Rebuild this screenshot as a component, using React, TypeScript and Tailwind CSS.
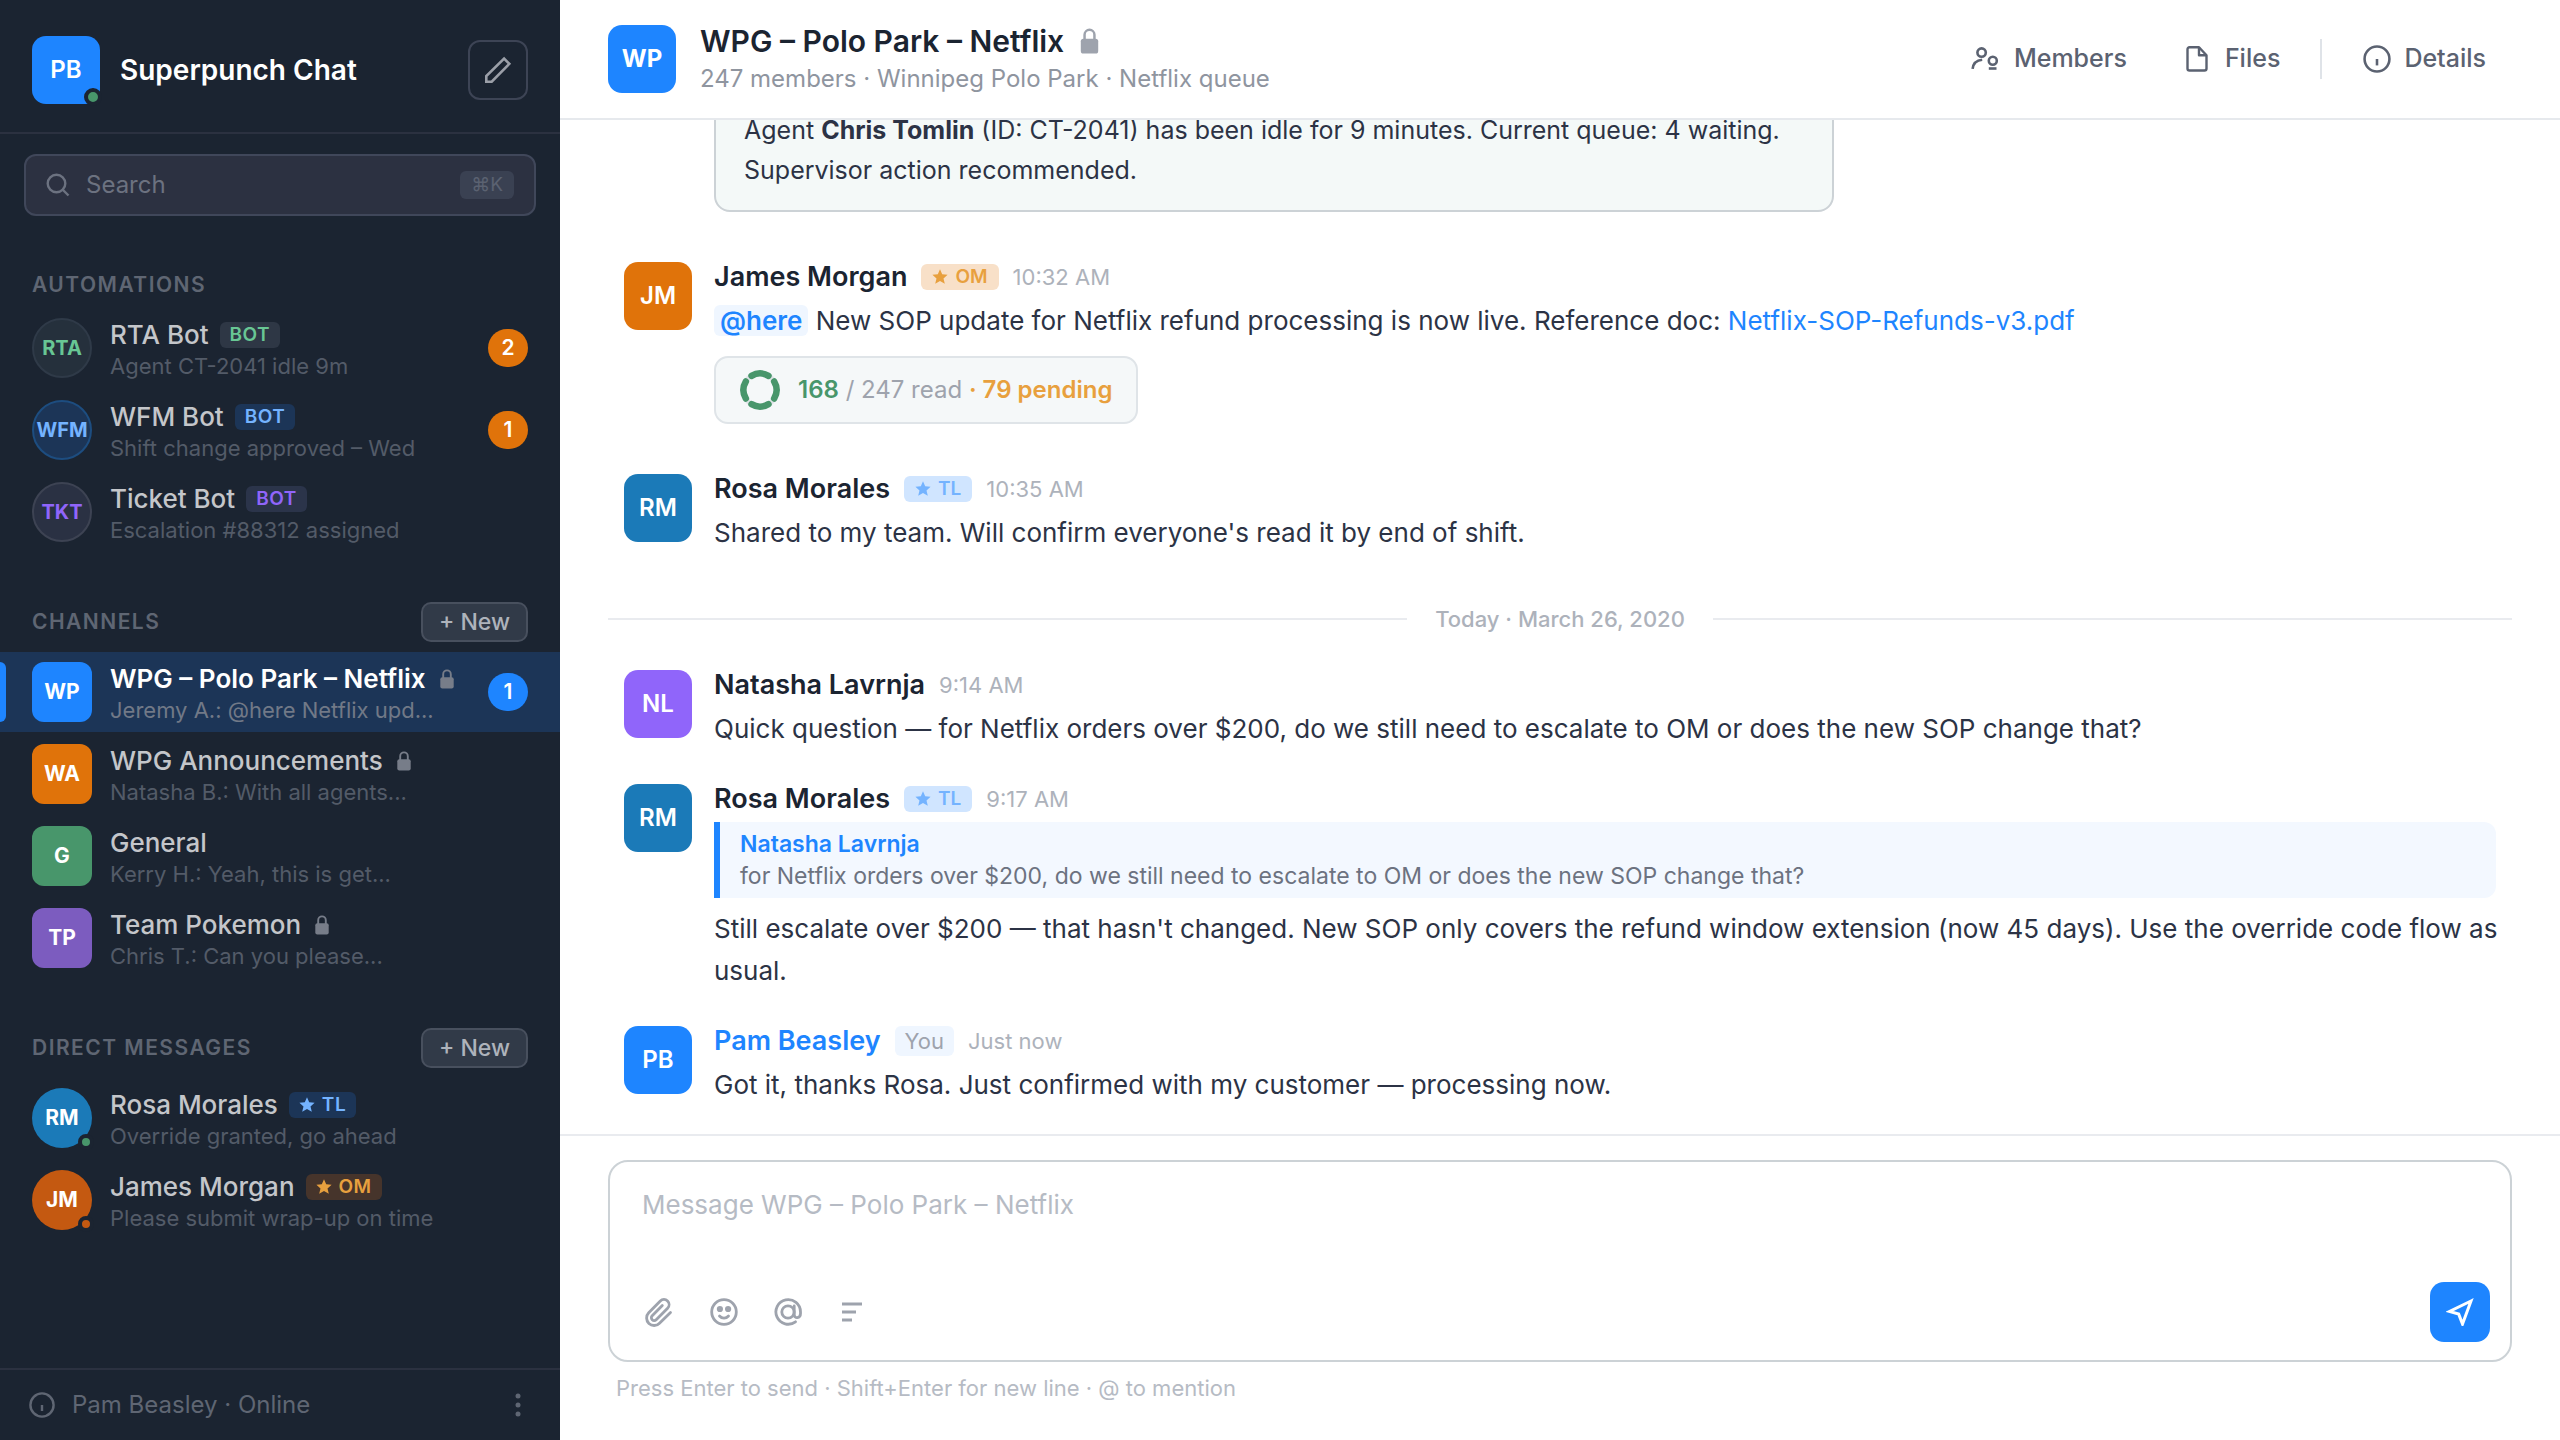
import type { ReactNode } from 'react';

type Tone = 'green' | 'blue' | 'violet' | 'orange';

interface SidebarEntry {
  name: string;
  preview: string;
  initials: string;
  avatar: string;
  tag?: { label: string; tone: Tone; star?: boolean };
  locked?: boolean;
  active?: boolean;
  unread?: number;
  unreadColor?: string;
  presence?: string;
}

const automations: SidebarEntry[] = [
  {
    name: 'RTA Bot',
    preview: 'Agent CT-2041 idle 9m',
    initials: 'RTA',
    avatar: 'rounded-full border-2 border-[#2f3a48] bg-[#25303c] text-xl text-[#68c694]',
    tag: { label: 'BOT', tone: 'green' },
    unread: 2,
    unreadColor: 'bg-[#e0730a]',
  },
  {
    name: 'WFM Bot',
    preview: 'Shift change approved – Wed',
    initials: 'WFM',
    avatar: 'rounded-full border-2 border-[#1d4d80] bg-[#1c3557] text-xl text-[#74b3ff]',
    tag: { label: 'BOT', tone: 'blue' },
    unread: 1,
    unreadColor: 'bg-[#e0730a]',
  },
  {
    name: 'Ticket Bot',
    preview: 'Escalation #88312 assigned',
    initials: 'TKT',
    avatar: 'rounded-full border-2 border-[#3d4353] bg-[#2a3143] text-xl text-[#9065fa]',
    tag: { label: 'BOT', tone: 'violet' },
  },
];

const channels: SidebarEntry[] = [
  {
    name: 'WPG – Polo Park – Netflix',
    preview: 'Jeremy A.: @here Netflix upd...',
    initials: 'WP',
    avatar: 'rounded-xl bg-[#1e85ff] text-[21px] text-white',
    locked: true,
    active: true,
    unread: 1,
    unreadColor: 'bg-[#1e85ff]',
  },
  {
    name: 'WPG Announcements',
    preview: 'Natasha B.: With all agents...',
    initials: 'WA',
    avatar: 'rounded-xl bg-[#e0730a] text-[21px] text-white',
    locked: true,
  },
  {
    name: 'General',
    preview: 'Kerry H.: Yeah, this is get...',
    initials: 'G',
    avatar: 'rounded-xl bg-[#48966b] text-[21px] text-white',
  },
  {
    name: 'Team Pokemon',
    preview: 'Chris T.: Can you please...',
    initials: 'TP',
    avatar: 'rounded-xl bg-[#7c5cbf] text-[21px] text-white',
    locked: true,
  },
];

const directMessages: SidebarEntry[] = [
  {
    name: 'Rosa Morales',
    preview: 'Override granted, go ahead',
    initials: 'RM',
    avatar: 'rounded-full bg-[#1b7ab8] text-[21px] text-white',
    tag: { label: 'TL', tone: 'blue', star: true },
    presence: 'bg-[#48966b]',
  },
  {
    name: 'James Morgan',
    preview: 'Please submit wrap-up on time',
    initials: 'JM',
    avatar: 'rounded-full bg-[#c45911] text-[21px] text-white',
    tag: { label: 'OM', tone: 'orange', star: true },
    presence: 'bg-[#c45911]',
  },
];

const darkTones: Record<Tone, string> = {
  green: 'bg-[#2e3745] text-[#68c694]',
  blue: 'bg-[#1c3557] text-[#74b3ff]',
  violet: 'bg-[#2b344a] text-[#9065fa]',
  orange: 'bg-[#46342b] text-[#e8a03e]',
};

function LockIcon({ className }: { className: string }) {
  return (
    <svg viewBox="0 0 14 20" className={className} aria-hidden="true">
      <path d="M3.2 9V5.2a3.8 3.8 0 0 1 7.6 0V9" fill="none" stroke="currentColor" strokeWidth="1.9" />
      <rect x="0.3" y="8.2" width="13.4" height="11.4" rx="2" fill="currentColor" />
    </svg>
  );
}

function StarIcon() {
  return (
    <svg viewBox="0 0 16 16" className="size-4" fill="currentColor" aria-hidden="true">
      <path d="M8 .3l2.2 5 5.4.5-4.1 3.6 1.3 5.4L8 12l-4.8 2.8 1.3-5.4L.4 5.8l5.4-.5z" />
    </svg>
  );
}

function InfoIcon({ className }: { className: string }) {
  return (
    <svg viewBox="0 0 28 28" className={className} fill="none" stroke="currentColor" strokeWidth="2.4" aria-hidden="true">
      <circle cx="14" cy="14" r="11.6" />
      <path d="M14 14v6" />
    </svg>
  );
}

function SectionHeading({ title, action }: { title: string; action?: string }) {
  return (
    <div className="flex items-center justify-between px-8 pb-[10px]">
      <h2 className="text-[21px] leading-[26px] font-semibold tracking-[0.07em] text-[#5f6673]">{title}</h2>
      {action && (
        <button
          type="button"
          aria-label={action}
          className="h-10 rounded-[10px] border-2 border-[#48505e] bg-[#313a48] px-4 text-[23px] leading-7 font-medium text-[#aeb3bb]"
        >
          + New
        </button>
      )}
    </div>
  );
}

function SidebarRow({ entry }: { entry: SidebarEntry }) {
  const { tag } = entry;
  return (
    <li>
      <a
        href="#"
        className={`relative flex items-center gap-[18px] px-8 py-2 ${entry.active ? 'bg-[#1c3557]' : ''}`}
      >
        {entry.active && <span className="absolute top-[10px] bottom-[10px] left-0 w-[6px] rounded-r-md bg-[#1e85ff]" />}
        <span className="relative shrink-0">
          <span className={`flex size-[60px] items-center justify-center font-bold ${entry.avatar}`}>{entry.initials}</span>
          {entry.presence && (
            <span className={`absolute -right-[2px] -bottom-[2px] size-4 rounded-full border-4 border-[#1b2431] ${entry.presence}`} />
          )}
        </span>
        <span className="min-w-0 flex-1 pt-[2px]">
          <span className="flex items-center">
            <span
              className={`truncate text-[26px] leading-[34px] ${entry.active ? 'font-semibold text-white' : 'font-medium text-[#c4c6ca]'}`}
            >
              {entry.name}
            </span>
            {entry.locked && <LockIcon className="ml-[14px] h-5 w-[14px] shrink-0 text-[#777d89]" />}
            {tag && (
              <span
                className={`ml-[11px] flex h-[26px] items-center gap-[7px] rounded-md px-[10px] text-[19px] font-semibold tracking-wide ${darkTones[tag.tone]}`}
              >
                {tag.star && <StarIcon />}
                {tag.label}
              </span>
            )}
          </span>
          <span className={`block truncate text-[22px] leading-7 ${entry.active ? 'text-[#717987]' : 'text-[#535b68]'}`}>
            {entry.preview}
          </span>
        </span>
        {entry.unread && (
          <span
            className={`flex h-[38px] min-w-10 items-center justify-center rounded-full text-[21px] font-semibold text-white ${entry.unreadColor}`}
          >
            {entry.unread}
          </span>
        )}
      </a>
    </li>
  );
}

function SidebarSection({ title, action, entries }: { title: string; action?: string; entries: SidebarEntry[] }) {
  return (
    <section>
      <SectionHeading title={title} action={action} />
      <ul className="flex flex-col gap-[2px]">
        {entries.map(entry => (
          <SidebarRow key={entry.name} entry={entry} />
        ))}
      </ul>
    </section>
  );
}

function Sidebar() {
  return (
    <aside className="flex w-[560px] shrink-0 flex-col bg-[#1b2431]">
      <div className="flex h-[134px] items-center gap-5 border-b-2 border-[#2b3140] px-8 pt-2">
        <div className="relative flex size-[68px] items-center justify-center rounded-[14px] bg-[#1e85ff] text-2xl font-semibold text-white">
          PB
          <span className="absolute -right-[2px] -bottom-[2px] size-[18px] rounded-full border-4 border-[#1b2431] bg-[#48966b]" />
        </div>
        <h1 className="flex-1 text-[28px] font-semibold text-white">Superpunch Chat</h1>
        <button
          type="button"
          aria-label="New message"
          className="flex size-[60px] items-center justify-center rounded-xl border-2 border-[#3d4455] text-[#9b9fa8]"
        >
          <svg viewBox="0 0 28 28" className="size-7" fill="none" stroke="currentColor" strokeWidth="2.6" aria-hidden="true">
            <path d="M2.3 25.7v-5.6L20.1 2.6l5.2 5.2L7.7 25.7z" />
          </svg>
        </button>
      </div>

      <div className="px-6 pt-5">
        <label className="flex h-[62px] items-center rounded-xl border-2 border-[#40475a] bg-[#2c3141] px-5">
          <svg viewBox="0 0 24 24" className="size-6 text-[#6c7280]" fill="none" stroke="currentColor" strokeWidth="2.4" aria-hidden="true">
            <circle cx="10.5" cy="10.5" r="8.8" />
            <path d="M17 17l5.5 5.5" />
          </svg>
          <input
            type="search"
            aria-label="Search"
            placeholder="Search"
            className="ml-4 min-w-0 flex-1 bg-transparent text-2xl text-white outline-none placeholder:text-[#6c7280]"
          />
          <kbd className="flex h-7 items-center rounded-md bg-[#3a4152] px-[11px] font-['Inter',sans-serif] text-[19px] text-[#5b6271]">⌘K</kbd>
        </label>
      </div>

      <nav className="flex min-h-0 flex-1 flex-col gap-[50px] overflow-hidden pt-[56px]">
        <SidebarSection title="AUTOMATIONS" entries={automations} />
        <SidebarSection title="CHANNELS" action="New channel" entries={channels} />
        <SidebarSection title="DIRECT MESSAGES" action="New direct message" entries={directMessages} />
      </nav>

      <div className="flex h-[72px] items-center border-t-2 border-[#2b3140] px-[28px] text-[#5f6673]">
        <InfoIcon className="size-7" />
        <span className="ml-4 flex-1 text-2xl">Pam Beasley · Online</span>
        <button type="button" aria-label="More options" className="flex w-7 justify-center">
          <svg viewBox="0 0 6 24" className="h-6 w-[6px]" fill="currentColor" aria-hidden="true">
            <circle cx="3" cy="3" r="2.5" />
            <circle cx="3" cy="12" r="2.5" />
            <circle cx="3" cy="21" r="2.5" />
          </svg>
        </button>
      </div>
    </aside>
  );
}

function HeaderButton({ icon, children }: { icon: ReactNode; children: ReactNode }) {
  return (
    <button type="button" className="flex h-[60px] items-center gap-3 px-6 text-[25px] font-medium text-[#5b6271]">
      {icon}
      {children}
    </button>
  );
}

function ChannelHeader() {
  return (
    <header className="flex h-[120px] shrink-0 items-center border-b-2 border-[#e6e9ed] pr-[50px] pl-12">
      <div className="flex size-[68px] items-center justify-center rounded-[14px] bg-[#1e85ff] text-2xl font-bold text-white">WP</div>
      <div className="ml-6 min-w-0 flex-1">
        <h2 className="flex items-center text-[30px] leading-9 font-semibold text-[#1b2431]">
          WPG – Polo Park – Netflix
          <LockIcon className="ml-4 h-[26px] w-[19px] text-[#9ea3ad]" />
        </h2>
        <p className="mt-1 text-2xl text-[#8f959f]">247 members · Winnipeg Polo Park · Netflix queue</p>
      </div>
      <div className="flex items-center gap-2">
        <HeaderButton
          icon={
            <svg viewBox="0 0 30 30" className="size-[30px] overflow-visible" fill="none" stroke="currentColor" strokeWidth="2.6" aria-hidden="true">
              <circle cx="9.6" cy="8.6" r="4.2" />
              <path d="M.6 24.8c.6-5 3.6-8.4 9.6-9" />
              <circle cx="20.8" cy="16.8" r="4" />
              <path d="M16.8 24.5h7.7" />
            </svg>
          }
        >
          Members
        </HeaderButton>
        <HeaderButton
          icon={
            <svg viewBox="0 0 30 30" className="size-[30px]" fill="none" stroke="currentColor" strokeWidth="2.4" strokeLinejoin="round" aria-hidden="true">
              <path d="M16 3.2H6.5a2 2 0 0 0-2 2v19.3a2 2 0 0 0 2 2h15a2 2 0 0 0 2-2V11.2z" />
              <path d="M16 3.2v8h7.5" />
            </svg>
          }
        >
          Files
        </HeaderButton>
        <div className="mx-2 h-10 w-[2px] bg-[#dfe3e8]" />
        <HeaderButton icon={<InfoIcon className="size-[30px]" />}>Details</HeaderButton>
      </div>
    </header>
  );
}

interface MessageProps {
  initials: string;
  avatar: string;
  author: string;
  time: string;
  tag?: 'TL' | 'OM';
  you?: boolean;
  children: ReactNode;
}

function Message({ initials, avatar, author, time, tag, you, children }: MessageProps) {
  return (
    <article className="flex gap-[22px] px-4 py-4">
      <div className={`mt-[2px] flex size-[68px] shrink-0 items-center justify-center rounded-[14px] text-2xl font-semibold text-white ${avatar}`}>
        {initials}
      </div>
      <div className="min-w-0 flex-1 text-[26px] leading-[42px] text-[#2c3345]">
        <div className="mb-[6px] flex h-[34px] items-center">
          <span className={`text-[27px] font-semibold ${you ? 'text-[#1e85ff]' : 'text-[#1b2431]'}`}>{author}</span>
          {tag && (
            <span
              className={`ml-[14px] flex h-[26px] items-center gap-[7px] rounded-md px-[11px] text-[19px] font-semibold ${
                tag === 'OM' ? 'bg-[#f8e0c8] text-[#e8a03e]' : 'bg-[#d0e5ff] text-[#74b3ff]'
              }`}
            >
              <StarIcon />
              {tag}
            </span>
          )}
          {you && <span className="ml-[14px] rounded-md bg-[#eff6ff] px-[10px] text-[22px] leading-[30px] text-[#9ea3ad]">You</span>}
          <time className="ml-[14px] text-[22px] text-[#adb2bb]">{time}</time>
        </div>
        {children}
      </div>
    </article>
  );
}

function ReadReceipt() {
  return (
    <div className="mt-[14px] flex h-[68px] w-fit items-center rounded-[14px] border-2 border-[#dfe4e8] bg-[#f5f8f9] px-6 text-[24px] text-[#9ea3ad]">
      <svg viewBox="0 0 40 40" className="mr-[18px] size-10" fill="none" aria-hidden="true">
        <circle cx="20" cy="20" r="16.5" stroke="#dfe4e8" strokeWidth="5" />
        <circle
          cx="20"
          cy="20"
          r="16.5"
          stroke="#48966b"
          strokeWidth="6.5"
          strokeLinecap="round"
          pathLength="100"
          strokeDasharray="17 8"
          strokeDashoffset="-4"
          transform="rotate(45 20 20)"
        />
      </svg>
      <span>
        <strong className="font-semibold text-[#48966b]">168</strong> / 247 read{' '}
        <span className="font-semibold text-[#e8a03e]">· 79 pending</span>
      </span>
    </div>
  );
}

function Conversation() {
  return (
    <div className="flex min-h-0 flex-1 flex-col justify-end overflow-hidden px-12 pb-3">
      <div className="mr-4 mb-8 ml-[106px]">
        <div className="max-w-[1120px] rounded-2xl border-2 border-[#ccd2d6] bg-[#f4f9f8] px-7 py-5 text-[25px] leading-10 text-[#2c3345]">
          Agent <strong className="font-bold">Chris Tomlin</strong> (ID: CT-2041) has been idle for 9 minutes. Current queue: 4 waiting.
          Supervisor action recommended.
        </div>
      </div>

      <div className="flex flex-col gap-4">
        <Message initials="JM" avatar="bg-[#e0730a]" author="James Morgan" time="10:32 AM" tag="OM">
          <p>
            <span className="rounded-md bg-[#eff6ff] px-[6px] font-semibold text-[#1e85ff]">@here</span> New SOP update for Netflix
            refund processing is now live. Reference doc:{' '}
            <a href="#" className="text-[#1e85ff]">
              Netflix-SOP-Refunds-v3.pdf
            </a>
          </p>
          <ReadReceipt />
        </Message>

        <Message initials="RM" avatar="bg-[#1b7ab8]" author="Rosa Morales" time="10:35 AM" tag="TL">
          <p>Shared to my team. Will confirm everyone's read it by end of shift.</p>
        </Message>

        <div className="flex items-center gap-7 pt-[19px] pb-[19px]">
          <div className="h-[2px] flex-1 bg-[#e9ebef]" />
          <span className="text-[22px] leading-7 font-medium text-[#adb2bb]">Today · March 26, 2020</span>
          <div className="h-[2px] flex-1 bg-[#e9ebef]" />
        </div>
      </div>

      <Message initials="NL" avatar="bg-[#9065fa]" author="Natasha Lavrnja" time="9:14 AM">
        <p>Quick question — for Netflix orders over $200, do we still need to escalate to OM or does the new SOP change that?</p>
      </Message>

      <Message initials="RM" avatar="bg-[#1b7ab8]" author="Rosa Morales" time="9:17 AM" tag="TL">
        <blockquote className="mb-[10px] rounded-r-xl border-l-[6px] border-[#1e85ff] bg-[#f3f8ff] px-5 py-[6px] text-[23px] leading-8 text-[#6c7280]">
          <cite className="block font-semibold text-[#1e85ff] not-italic">Natasha Lavrnja</cite>
          for Netflix orders over $200, do we still need to escalate to OM or does the new SOP change that?
        </blockquote>
        <p className="-mr-4">
          Still escalate over $200 — that hasn't changed. New SOP only covers the refund window extension (now 45 days). Use the override
          code flow as usual.
        </p>
      </Message>

      <Message initials="PB" avatar="bg-[#1e85ff]" author="Pam Beasley" time="Just now" you>
        <p>Got it, thanks Rosa. Just confirmed with my customer — processing now.</p>
      </Message>
    </div>
  );
}

function Composer() {
  return (
    <footer className="shrink-0 border-t-2 border-[#e9ebef] px-12 pt-6 pb-9">
      <div className="rounded-[20px] border-2 border-[#ccd2d6] px-8 pt-6 pb-[18px]">
        <textarea
          aria-label="Message"
          placeholder="Message WPG – Polo Park – Netflix"
          className="block h-24 w-full resize-none text-[26px] leading-[38px] text-[#2c3345] outline-none placeholder:text-[#b6bbc4]"
        />
        <div className="-mr-3 flex items-center text-[#9ea3ad]">
          <button type="button" aria-label="Attach file" className="mr-9">
            <svg viewBox="0 0 32 32" className="size-8" fill="none" stroke="currentColor" strokeWidth="2.8" strokeLinecap="round" aria-hidden="true">
              <path d="M28.5 16.5 17.5 27.2a7.4 7.4 0 0 1-10.8-10.4L18.3 5a5.1 5.1 0 0 1 7.3 7.2L14.2 23.8a2.8 2.8 0 0 1-4-4L20.3 9.600" />
            </svg>
          </button>
          <button type="button" aria-label="Add emoji" className="mr-9">
            <svg viewBox="0 0 28 28" className="size-7" fill="none" stroke="currentColor" strokeWidth="2.8" strokeLinecap="round" aria-hidden="true">
              <circle cx="14" cy="14" r="12.3" />
              <circle cx="9.9" cy="11" r="3.1" fill="currentColor" stroke="none" />
              <circle cx="18.1" cy="11" r="3.1" fill="currentColor" stroke="none" />
              <path d="M9.5 18c2.5 2.8 6.5 2.8 9 0" />
            </svg>
          </button>
          <button type="button" aria-label="Mention someone" className="mr-9">
            <svg viewBox="0 0 28 28" className="size-7" fill="none" stroke="currentColor" strokeWidth="2.8" strokeLinecap="round" aria-hidden="true">
              <circle cx="14" cy="14" r="6.2" />
              <path d="M20.2 8v8.5c0 4.6 6.3 4 6.3-1V14A12.3 12.3 0 1 0 21.5 23.8" />
            </svg>
          </button>
          <button type="button" aria-label="Formatting">
            <svg viewBox="0 0 28 28" className="size-7" fill="none" stroke="currentColor" strokeWidth="2.8" aria-hidden="true">
              <path d="M4 6h20M4 14h14M4 22h10" />
            </svg>
          </button>
          <button
            type="button"
            aria-label="Send message"
            className="ml-auto flex size-[60px] items-center justify-center rounded-[14px] bg-[#1e85ff] text-white"
          >
            <svg viewBox="0 0 28 28" className="size-7" fill="none" stroke="currentColor" strokeWidth="3" aria-hidden="true">
              <path d="M25 3 3.5 13.5l9.2 2.600L16.500 26z" />
            </svg>
          </button>
        </div>
      </div>
      <p className="mt-[10px] px-2 text-[22px] leading-8 text-[#b6bbc4]">Press Enter to send · Shift+Enter for new line · @ to mention</p>
    </footer>
  );
}

export default function App() {
  return (
    <div className="flex h-screen bg-white font-['Inter',sans-serif]">
      <Sidebar />
      <main className="flex min-w-0 flex-1 flex-col">
        <ChannelHeader />
        <Conversation />
        <Composer />
      </main>
    </div>
  );
}
